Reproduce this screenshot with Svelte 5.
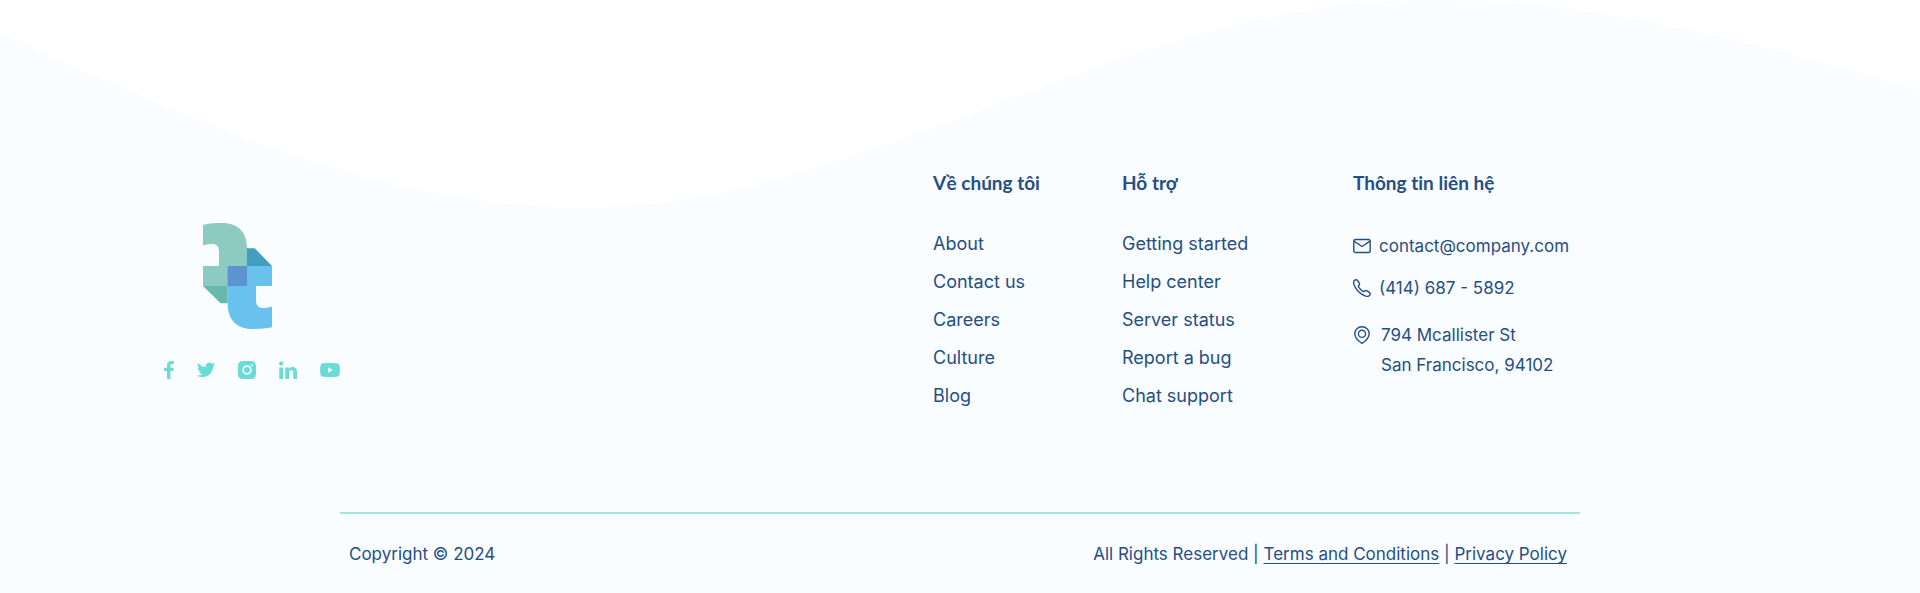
<script>
  const columns = [
    { title: 'Về chúng tôi', links: ['About', 'Contact us', 'Careers', 'Culture', 'Blog'] },
    { title: 'Hỗ trợ', links: ['Getting started', 'Help center', 'Server status', 'Report a bug', 'Chat support'] },
  ];
</script>

<footer class="footer">
  <svg class="wave" viewBox="0 0 1920 210" preserveAspectRatio="none" aria-hidden="true">
    <path d="M0 33C195 121 380 208 583 208C865 208 1120 0 1431 0C1600 0 1760 45 1920 90V0H0Z" fill="#fff" />
  </svg>

  <div class="main">
    <div class="brand">
      <a class="logo" href="#home" aria-label="Home">
        <svg width="69" height="106" viewBox="0 0 69 106">
          <path d="M44 25.3h7.7L69 43H44z" fill="#419fc1" />
          <path d="M0 63h24.7v17.3H17.6z" fill="#66b9ac" />
          <path d="M0 1.7C6 .4 12 0 19 0C35 0 44 9 44 25.300V63H0V43H16V29C16 23 13.500 21 9 21C5.500 21 3 21.600 0 22.500Z" fill="#8dcac1" />
          <path d="M69 104.300C63 105.600 57 106 50 106C34 106 24.700 97 24.700 80.700V43H69V63H53V77C53 83 55.500 85 60 85C63.500 85 66 84.400 69 83.500Z" fill="#68c2ed" />
          <path d="M24.700 43H44V63H24.700z" fill="#5d94cf" />
        </svg>
      </a>
      <div class="social">
        <a href="#facebook" aria-label="Facebook">
          <svg width="10" height="18" viewBox="0 0 10 18"><path d="M3 18V10H0V6.800H3V4.500C3 1.500 4.800 0 7.400 0C8.600 0 9.600.1 10 .2V3.100H8.100C6.700 3.100 6.400 3.800 6.400 4.800V6.800H9.800L9.400 10H6.400V18Z" /></svg>
        </a>
        <a href="#twitter" aria-label="Twitter">
          <svg width="18" height="16" viewBox="0 0 24 20"><path d="M24 2.400a10 10 0 0 1-2.800.8A5 5 0 0 0 23.300.4a10 10 0 0 1-3.100 1.200A4.920 4.920 0 0 0 11.800 6.100 14 14 0 0 1 1.700.9a4.930 4.930 0 0 0 1.500 6.600 5 5 0 0 1-2.200-.6v.1a4.920 4.920 0 0 0 3.900 4.800 5 5 0 0 1-2.200.1 4.930 4.930 0 0 0 4.600 3.400A9.900 9.900 0 0 1 0 17.400 14 14 0 0 0 7.500 19.500C16.600 19.500 21.800 11.800 21.500 4.900A10 10 0 0 0 24 2.400Z" /></svg>
        </a>
        <a href="#instagram" aria-label="Instagram">
          <svg width="18" height="18" viewBox="0 0 18 18"><path fill-rule="evenodd" d="M5 0H13Q18 0 18 5V13Q18 18 13 18H5Q0 18 0 13V5Q0 0 5 0ZM9 4.300a4.700 4.700 0 1 0 0 9.400a4.700 4.700 0 0 0 0-9.400ZM9 6a3 3 0 1 1 0 6a3 3 0 0 1 0-6ZM13.800 3.200a1.100 1.100 0 1 0 0 2.200a1.100 1.100 0 0 0 0-2.200Z" /></svg>
        </a>
        <a href="#linkedin" aria-label="LinkedIn">
          <svg width="18" height="18" viewBox="0 0 18 18"><circle cx="2.100" cy="2.600" r="2.100" /><path d="M.3 6.400H4V18H.3ZM6.300 6.400H9.900V8C10.600 6.800 11.900 6.100 13.500 6.100C17 6.100 18 8.200 18 11.500V18H14.300V12.200C14.300 10.500 14 9.300 12.300 9.300C10.600 9.300 10 10.500 10 12.200V18H6.300Z" /></svg>
        </a>
        <a href="#youtube" aria-label="YouTube">
          <svg width="20" height="14" viewBox="0 0 20 14"><path fill-rule="evenodd" d="M3 .3Q10-.3 17 .3Q19.300.5 19.600 2.700Q20.200 7 19.600 11.300Q19.300 13.500 17 13.700Q10 14.300 3 13.700Q.7 13.500.4 11.300Q-.2 7 .4 2.700Q.7.5 3 .3ZM8 4.300V9.700L12.800 7Z" /></svg>
        </a>
      </div>
    </div>

    <div class="columns">
      {#each columns as column}
        <nav aria-label={column.title}>
          <h2>{column.title}</h2>
          <ul>
            {#each column.links as link}
              <li><a href="#{link.toLowerCase().replaceAll(' ', '-')}">{link}</a></li>
            {/each}
          </ul>
        </nav>
      {/each}
      <section>
        <h2>Thông tin liên hệ</h2>
        <address>
          <a class="contact" href="mailto:contact@company.com">
            <svg width="18" height="18" viewBox="0 0 18 18"><rect x=".8" y="2.500" width="16.400" height="13" rx="1.800" /><path d="M1 4.200L9 9.500L17 4.200" /></svg>
            <span>contact@company.com</span>
          </a>
          <a class="contact" href="tel:4146875892">
            <svg width="18" height="18" viewBox="0 0 18 18"><path d="M1.300 1.600C2.700.3 4.100.6 4.900 1.800L6.300 4.100C6.900 5.200 6.300 5.900 5.700 6.500C5.100 7.200 5.300 7.700 5.800 8.400C6.900 10 8.300 11.300 9.900 12.300C10.600 12.700 11.100 12.700 11.700 12.100C12.400 11.500 13.100 11.300 14 11.900L16.300 13.400C17.500 14.200 17.500 15.400 16.200 16.700C15.100 17.700 13.700 17.500 12 16.800C7.600 15 3.100 10.700 1.200 6.200C.4 4.200.3 2.600 1.300 1.600Z" /></svg>
            <span>(414) 687 - 5892</span>
          </a>
          <div class="contact place">
            <svg width="18" height="18" viewBox="0 0 18 18"><path d="M9 17.300C6.500 15.700 1.800 12 1.800 7.700C1.800 3.500 5 .8 9 .8S16.200 3.500 16.200 7.700C16.200 12 11.500 15.700 9 17.300Z" /><circle cx="9" cy="7.800" r="3.600" /></svg>
            <span>794 Mcallister St<br />San Francisco, 94102</span>
          </div>
        </address>
      </section>
    </div>
  </div>

  <div class="legal">
    <span>Copyright © 2024</span>
    <span>All Rights Reserved | <a href="#terms">Terms and Conditions</a> | <a href="#privacy">Privacy Policy</a></span>
  </div>
</footer>

<style>
  :global(body) {
    margin: 0;
    background: #f9fdff;
  }
  .footer {
    position: relative;
    color: #264e86;
    background: #f9fdff;
    font: 17px/30px Inter, sans-serif;
  }
  .wave {
    position: absolute;
    inset: 0 0 auto;
    width: 100%;
    height: 210px;
  }
  .main {
    position: relative;
    display: grid;
    grid-template-columns: 1fr minmax(0, 1240px) 1fr;
    padding-top: 168px;
  }
  .brand {
    justify-self: end;
    display: flex;
    flex-direction: column;
    gap: 32px;
    width: 176px;
    padding-top: 55px;
  }
  .logo {
    display: flex;
    padding-left: 39px;
  }
  .social {
    display: flex;
    align-items: center;
    justify-content: space-between;
    fill: #6adbd7;
  }
  .social a,
  .social svg {
    display: block;
  }
  .columns {
    display: grid;
    grid-template-columns: 189px 231px 227px;
    justify-content: end;
    min-height: 344px;
  }
  h2 {
    margin: 0 0 27px;
    font: 700 19px/30px Lato, sans-serif;
    font-variant-ligatures: none;
  }
  ul {
    display: grid;
    gap: 8px;
    margin: 0;
    padding: 4px 0 0;
    font-size: 18px;
    list-style: none;
  }
  a {
    color: inherit;
    text-decoration: none;
  }
  address {
    display: grid;
    gap: 12px;
    padding-top: 6px;
    font-style: normal;
  }
  .contact {
    display: flex;
    align-items: center;
    gap: 8px;
    white-space: nowrap;
  }
  .contact svg {
    flex: none;
    fill: none;
    stroke: currentColor;
    stroke-width: 1.4;
    stroke-linejoin: round;
  }
  .place {
    align-items: start;
    gap: 10px;
    padding-top: 5px;
  }
  .place svg {
    margin-top: 6px;
  }
  .legal {
    position: relative;
    display: flex;
    justify-content: space-between;
    box-sizing: border-box;
    max-width: 1240px;
    margin: 0 auto;
    padding: 25px 13px 24px 9px;
    border-top: 2px solid #a5e6e5;
  }
  .legal a {
    text-decoration: underline;
    text-decoration-skip-ink: none;
    text-underline-offset: 3px;
  }
</style>
